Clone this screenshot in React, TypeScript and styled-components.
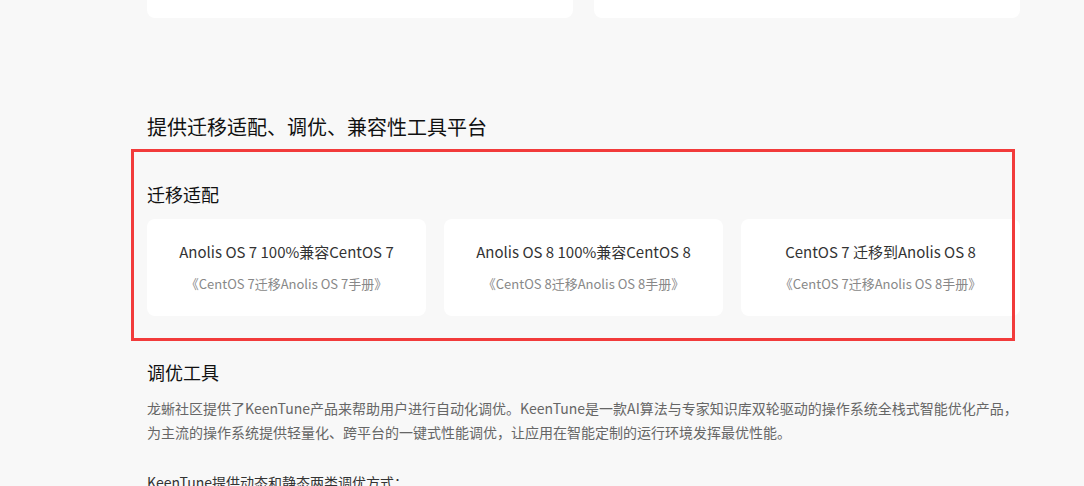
import styled, { createGlobalStyle } from "styled-components";

const GlobalStyle = createGlobalStyle`
  html, body {
    margin: 0;
    padding: 0;
    background: #f8f8f8;
    font-family: "Noto Sans CJK SC", "Noto Sans", sans-serif;
    overflow: hidden;
  }
`;

const migrations = [
  { title: "Anolis OS 7 100%兼容CentOS 7", doc: "《CentOS 7迁移Anolis OS 7手册》" },
  { title: "Anolis OS 8 100%兼容CentOS 8", doc: "《CentOS 8迁移Anolis OS 8手册》" },
  { title: "CentOS 7 迁移到Anolis OS 8", doc: "《CentOS 7迁移Anolis OS 8手册》" },
];

const App = function () {
  return (
    <>
      <GlobalStyle />
      <Page>
        <TopRow>
          <TopCard />
          <TopCard />
        </TopRow>

        <Heading>提供迁移适配、调优、兼容性工具平台</Heading>

        <Section>
          <Highlight />
          <SectionTitle>迁移适配</SectionTitle>
          <CardRow>
            {migrations.map((m) => (
              <Card key={m.title}>
                <CardTitle>{m.title}</CardTitle>
                <CardDoc>{m.doc}</CardDoc>
              </Card>
            ))}
          </CardRow>
        </Section>

        <TuneSection>
          <SectionTitle>调优工具</SectionTitle>
          <Paragraph>
            龙蜥社区提供了KeenTune产品来帮助用户进行自动化调优。KeenTune是一款AI算法与专家知识库双轮驱动的操作系统全栈式智能优化产品，
            <br />
            为主流的操作系统提供轻量化、跨平台的一键式性能调优，让应用在智能定制的运行环境发挥最优性能。
          </Paragraph>
          <Lead>KeenTune提供动态和静态两类调优方式：</Lead>
        </TuneSection>
      </Page>
    </>
  );
};

export default App;

const Page = styled.div`
  width: 873px;
  padding-left: 147px;
  height: 486px;
  overflow: hidden;
`;

const TopRow = styled.div`
  display: grid;
  grid-template-columns: 1fr 1fr;
  gap: 21px;
  height: 18px;
`;

const TopCard = styled.div`
  background: #fff;
  border-radius: 0 0 8px 8px;
`;

const Heading = styled.h2`
  margin: 95px 0 0;
  font-size: 20px;
  line-height: 28px;
  font-weight: 400;
  color: #111;
`;

const Section = styled.section`
  position: relative;
  padding-top: 31px;
  padding-bottom: 25px;
  margin-top: 9px;
`;

const Highlight = styled.div`
  position: absolute;
  left: -16px;
  top: -1px;
  width: 884px;
  height: 192px;
  box-sizing: border-box;
  border: 3px solid #f23b3b;
  pointer-events: none;
  z-index: 2;
`;

const SectionTitle = styled.h3`
  margin: 0;
  font-size: 18px;
  line-height: 26px;
  font-weight: 400;
  color: #111;
`;

const CardRow = styled.div`
  display: grid;
  grid-template-columns: repeat(3, 279px);
  gap: 18px;
  margin-top: 12px;
`;

const Card = styled.div`
  background: #fff;
  border-radius: 8px;
  height: 97px;
  box-sizing: border-box;
  padding-top: 22px;
  display: flex;
  flex-direction: column;
  align-items: center;
`;

const CardTitle = styled.div`
  font-size: 15px;
  line-height: 22px;
  color: #333;
`;

const CardDoc = styled.div`
  margin-top: 11px;
  font-size: 13px;
  line-height: 19px;
  color: #888;
`;

const TuneSection = styled.section`
  margin-top: 18px;
`;

const Paragraph = styled.p`
  margin: 11px 0 0;
  font-size: 14px;
  line-height: 24px;
  color: #666;
`;

const Lead = styled.p`
  margin: 26px 0 0;
  font-size: 14px;
  line-height: 24px;
  color: #333;
`;
